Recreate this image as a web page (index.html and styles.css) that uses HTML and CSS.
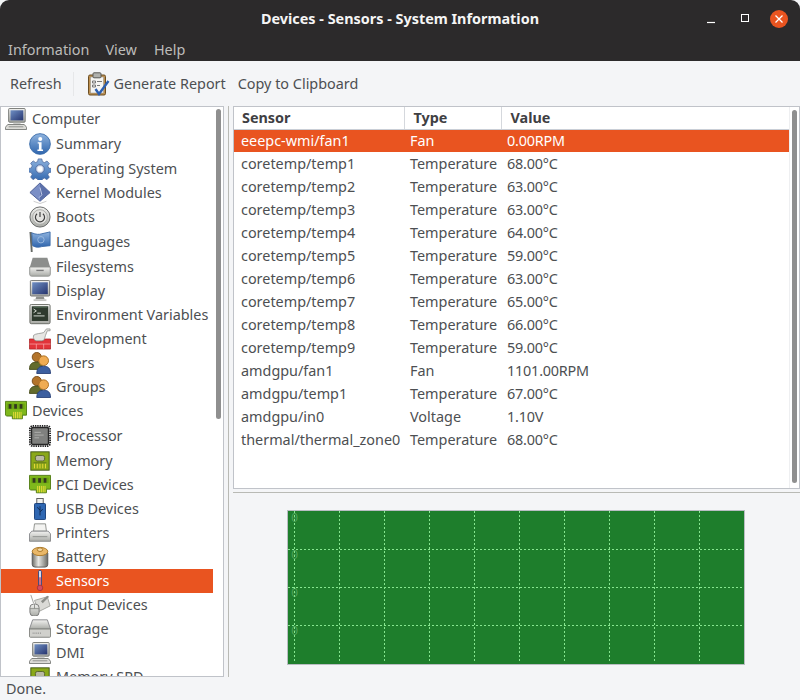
FILE: index.html
```html
<!DOCTYPE html>
<html lang="en">
<head>
<meta charset="utf-8">
<title>Devices - Sensors - System Information</title>
<link rel="stylesheet" href="styles.css">
</head>
<body>
<svg class="defs" aria-hidden="true">
  <defs>
    <linearGradient id="gBlue" x1="0" y1="0" x2="0" y2="1"><stop offset="0" stop-color="#8fb3de"/><stop offset="1" stop-color="#2f65ad"/></linearGradient>
    <linearGradient id="gGray" x1="0" y1="0" x2="0" y2="1"><stop offset="0" stop-color="#f2f2f0"/><stop offset="1" stop-color="#a9aba6"/></linearGradient>
    <linearGradient id="gScreen" x1="0" y1="0" x2="1" y2="1"><stop offset="0" stop-color="#6f8fc4"/><stop offset="1" stop-color="#26346e"/></linearGradient>
    <linearGradient id="gBat" x1="0" y1="0" x2="1" y2="0"><stop offset="0" stop-color="#6d6d68"/><stop offset=".4" stop-color="#e8e8e4"/><stop offset="1" stop-color="#6b6b66"/></linearGradient>
    <symbol id="i-computer" viewBox="0 0 24 24">
      <rect x="4" y="0.500" width="18" height="15" rx="1" fill="url(#gGray)" stroke="#6d706c"/>
      <rect x="6" y="2.500" width="14" height="11" fill="url(#gScreen)"/>
      <rect x="9" y="15" width="8" height="2" fill="#a5a7a3"/>
      <path d="M3 18h18l2.500 3v2.500H.5V21z" fill="#dcdcd8" stroke="#777a76"/>
      <path d="M4 20.500h16" stroke="#8b8d89"/>
    </symbol>
    <symbol id="i-info" viewBox="0 0 24 24">
      <circle cx="12" cy="12" r="11.300" fill="url(#gBlue)" stroke="#3a6cab"/>
      <circle cx="12.300" cy="6.500" r="2.200" fill="#fff"/>
      <path d="M9.500 10h4.200v8h1.600v1.500H9.200V18h1.600v-6.500H9.500z" fill="#fff"/>
    </symbol>
    <symbol id="i-gear" viewBox="0 0 24 24">
      <path d="M10 1h4l.6 3 2.400 1 2.600-1.700 2.600 2.800-1.700 2.500 1 2.400 3 .6v3.800l-3 .6-1 2.400 1.700 2.600-2.800 2.600-2.500-1.700-2.300 1-.6 3h-4l-.6-3-2.400-1-2.600 1.700-2.600-2.800 1.700-2.500-1-2.400-3-.6v-3.800l3-.6 1-2.400L1.800 5.800l2.800-2.600L7 4.900 9.400 4z" fill="url(#gBlue)" stroke="#4c659b" stroke-width=".8"/>
      <circle cx="12" cy="12" r="4.600" fill="#dfe5f1" stroke="#4c659b"/>
      <circle cx="12" cy="12" r="2.600" fill="#fff"/>
    </symbol>
    <symbol id="i-kernel" viewBox="0 0 24 24">
      <path d="M12 1l11 10.500L12 21 1 11.500z" fill="#7b8fc6" stroke="#46588f"/>
      <path d="M12 1l11 10.500L12 21z" fill="#5c70aa"/>
      <path d="M12 6l2 8-3 3" stroke="#c9d2ea" fill="none"/>
      <path d="M5 21l7 2.500 7-2.500" stroke="#c8c8c8" fill="none"/>
    </symbol>
    <symbol id="i-power" viewBox="0 0 24 24">
      <circle cx="12" cy="12" r="11" fill="url(#gGray)" stroke="#5f6160"/>
      <circle cx="12" cy="12" r="8" fill="#e3e3e0" stroke="#a7a8a5"/>
      <path d="M8.800 8.500a5 5 0 1 0 6.400 0" fill="none" stroke="#3f3f3f" stroke-width="1.300"/>
      <path d="M12 6.500v5.500" stroke="#3f3f3f" stroke-width="1.300"/>
    </symbol>
    <symbol id="i-flag" viewBox="0 0 24 24">
      <path d="M.5 1h2.500l1 22H2z" fill="#666a66"/>
      <path d="M3 2c5 2 8 2 11 1l9-2v15l-9 1c-3 1-7 1-10-1z" fill="url(#gBlue)" stroke="#3c6ba8"/>
      <circle cx="13" cy="9.500" r="3.500" fill="none" stroke="#9dbbe0"/>
    </symbol>
    <symbol id="i-drive" viewBox="0 0 24 24">
      <path d="M4 2h16l3 10H1z" fill="#8c8e8c"/>
      <path d="M.8 12h22.400v8a2 2 0 0 1-2 2H2.800a2 2 0 0 1-2-2z" fill="url(#gGray)" stroke="#8d8f8c"/>
      <rect x="8" y="15" width="8" height="1.500" fill="#777"/>
    </symbol>
    <symbol id="i-display" viewBox="0 0 24 24">
      <rect x="1.500" y="0.500" width="21" height="17" rx="1" fill="url(#gGray)" stroke="#6e706d"/>
      <rect x="3.500" y="2.500" width="17" height="13" fill="url(#gScreen)"/>
      <path d="M8 18h8l1 3H7z" fill="#8e908d"/>
      <path d="M5 22h14" stroke="#c5c5c2" stroke-width="2"/>
    </symbol>
    <symbol id="i-terminal" viewBox="0 0 24 24">
      <rect x="1" y="0.500" width="22" height="21" rx="1.500" fill="url(#gGray)" stroke="#64665f"/>
      <rect x="3" y="2.500" width="18" height="16" fill="#2e3a2e"/>
      <path d="M5 5.500l3 2-3 2M9 10h4M5 13h12" fill="none" stroke="#e2e8e0"/>
      <path d="M5 3.500h15" stroke="#55705a"/>
    </symbol>
    <symbol id="i-dev" viewBox="0 0 24 24">
      <path d="M.5 12h6l2 2h7l2-2h6v11H.5z" fill="#e2343a" stroke="#a81e22" stroke-width=".8"/>
      <path d="M.5 17.500h23M8 17.500V23M16 17.500V23" stroke="#f9a8aa" stroke-width=".8"/>
      <path d="M5 8c2-2 8-2 11-3l3-4h4v2h-3l-2 5c-1 4-2 6-4 6H8c-2 0-4-3-3-6z" fill="#e6e6e3" stroke="#8b8c88" stroke-width=".8"/>
    </symbol>
    <symbol id="i-users" viewBox="0 0 24 24">
      <circle cx="8.500" cy="5.500" r="5" fill="#b3742a" stroke="#7a4c18"/>
      <path d="M.5 19c0-6 3-8 8-8s6 2 6 8z" fill="#636b2c" stroke="#4a5020"/>
      <circle cx="16" cy="9.500" r="5.300" fill="#f0ac52" stroke="#a86c20"/>
      <path d="M8.500 23.500c0-6 3-8 7.500-8s7.500 2 7.500 8z" fill="#3c5fa0" stroke="#2a4278"/>
    </symbol>
    <symbol id="i-board" viewBox="0 0 24 24">
      <path d="M.5 1.500h23v15H19v4H8v-3H2l-1.500-1z" fill="#7fb81c" stroke="#4f7a10"/>
      <rect x="2.500" y="4" width="19" height="6" fill="#6ba412"/>
      <rect x="4" y="4.500" width="3" height="5" fill="#32381e"/>
      <rect x="10" y="4.500" width="3" height="5" fill="#32381e"/>
      <rect x="16" y="4.500" width="3" height="5" fill="#32381e"/>
      <path d="M9.500 13v7M11.500 13v7M13.500 13v7M15.500 13v7M17.500 13v7" stroke="#f1dc3a"/>
    </symbol>
    <symbol id="i-cpu" viewBox="0 0 24 24">
      <rect x="1" y="1" width="22" height="22" rx="3" fill="none" stroke="#222" stroke-width="2" stroke-dasharray="1.500 1"/>
      <rect x="2" y="2" width="20" height="20" rx="2" fill="#262626"/>
      <rect x="3.500" y="3.500" width="17" height="17" rx="1" fill="#7f807e"/>
      <path d="M6 8h7M6 11h10M6 14h5" stroke="#b2b2b0"/>
    </symbol>
    <symbol id="i-mem" viewBox="0 0 24 24">
      <rect x="2" y="2" width="20" height="20" fill="#8aa818" stroke="#3b5212"/>
      <rect x="7" y="6" width="10" height="6" rx="2" fill="#bab9a4" stroke="#54622a"/>
      <path d="M5 14h14" stroke="#5b701c"/>
      <path d="M6 15v5M9 15v5M12 15v5M15 15v5M18 15v5" stroke="#eed93a"/>
    </symbol>
    <symbol id="i-usb" viewBox="0 0 24 24">
      <rect x="8.500" y="0.500" width="7" height="6" fill="#f0f0ee" stroke="#555"/>
      <rect x="6" y="6" width="12" height="17.500" rx="1" fill="#2f67b2" stroke="#163d78"/>
      <path d="M12 9v10M12 13l-2.500-2v-1M12 15l2.500-2v-1" stroke="#10294f" fill="none"/>
    </symbol>
    <symbol id="i-printer" viewBox="0 0 24 24">
      <path d="M6 2h12l1 8H5z" fill="#f3f3f1" stroke="#8a8c88"/>
      <path d="M3 10h18l2.500 3v8H.5v-8z" fill="url(#gGray)" stroke="#85878a"/>
      <path d="M4 16h16" stroke="#8d8f8b"/>
    </symbol>
    <symbol id="i-battery" viewBox="0 0 24 24">
      <rect x="3.500" y="5" width="17" height="18" rx="3" fill="url(#gBat)" stroke="#555"/>
      <ellipse cx="12" cy="6" rx="8.500" ry="4.500" fill="#e9b768" stroke="#a87626"/>
      <ellipse cx="12" cy="4" rx="3" ry="2" fill="#f6d9a3" stroke="#a87626"/>
    </symbol>
    <symbol id="i-therm" viewBox="0 0 24 24">
      <rect x="10.500" y="0.500" width="3" height="19" rx="1.200" fill="#eef2fa" stroke="#1d3d86"/>
      <path d="M12 8v10" stroke="#d3304a" stroke-width="1.400"/>
      <circle cx="12" cy="19.500" r="3" fill="#d64a60" stroke="#a33"/>
    </symbol>
    <symbol id="i-input" viewBox="0 0 24 24">
      <path d="M6 7l14-4 3 10-12 6z" fill="#dadad6" stroke="#a3a49f"/>
      <path d="M13 8l7-6 2 1-7 7z" fill="#8b8d88"/>
      <path d="M2 1l3 9" stroke="#9b9c98"/>
      <rect x="1" y="11" width="10" height="13" rx="4" fill="url(#gGray)" stroke="#777"/>
      <path d="M6 11v5M1 16h10" stroke="#8a8c88"/>
    </symbol>
    <symbol id="i-storage" viewBox="0 0 24 24">
      <path d="M4 2h16l3.500 10H.5z" fill="url(#gGray)" stroke="#85878a"/>
      <path d="M.5 12h23v8a1 1 0 0 1-1 1h-21a1 1 0 0 1-1-1z" fill="#d0d0cc" stroke="#7f817c"/>
      <path d="M4 16.500h10" stroke="#777" stroke-dasharray="1 1"/>
    </symbol>
    <symbol id="i-report" viewBox="0 0 24 24">
      <rect x="1.500" y="3" width="17" height="20" rx="1.500" fill="#bd8f4f" stroke="#6b4e24"/>
      <rect x="3.500" y="5" width="13" height="16" fill="#f5f5f3" stroke="#8f8f8b" stroke-width=".5"/>
      <rect x="6" y="0.800" width="8" height="5" rx="1" fill="#b0b1ad" stroke="#5a5b57"/>
      <path d="M5.500 9h3v2h-3zM5.500 13h3v2h-3zM10 9.500h5M10 13.500h3" fill="none" stroke="#777"/>
      <path d="M8.500 17l3.500 5 9.500-13" fill="none" stroke="#2c5fb0" stroke-width="2.400"/>
    </symbol>
  </defs>
</svg>

<div class="window">
  <header class="titlebar">
    <div class="title-row">
      <h1 class="title">Devices - Sensors - System Information</h1>
      <div class="controls">
        <svg class="ctl" width="18" height="18" viewBox="0 0 18 18"><path d="M1 12.500h8" stroke="#fff" stroke-width="1.200"/></svg>
        <svg class="ctl ctl-max" width="18" height="18" viewBox="0 0 18 18"><rect x="4.500" y="4.500" width="7" height="7" fill="none" stroke="#fff"/></svg>
        <svg class="ctl-close" width="18" height="18" viewBox="0 0 18 18"><circle cx="9" cy="9" r="9" fill="#e95420"/><path d="M5.500 5.500l7 7M12.500 5.500l-7 7" stroke="#fff" stroke-width="1.300"/></svg>
      </div>
    </div>
    <nav class="menubar">
      <span class="menu-item">Information</span>
      <span class="menu-item">View</span>
      <span class="menu-item">Help</span>
    </nav>
  </header>

  <div class="toolbar">
    <span class="tool">Refresh</span>
    <span class="tool-sep"></span>
    <svg class="tool-icon" width="24" height="24"><use href="#i-report"/></svg>
    <span class="tool tool-report">Generate Report</span>
    <span class="tool">Copy to Clipboard</span>
  </div>

  <main class="panes">
    <aside class="tree-pane">
      <ul class="tree">
        <li class="row top"><svg class="ico"><use href="#i-computer"/></svg><span class="label">Computer</span></li>
        <li class="row tall"><svg class="ico"><use href="#i-info"/></svg><span class="label">Summary</span></li>
        <li class="row tall"><svg class="ico"><use href="#i-gear"/></svg><span class="label">Operating System</span></li>
        <li class="row"><svg class="ico"><use href="#i-kernel"/></svg><span class="label">Kernel Modules</span></li>
        <li class="row"><svg class="ico"><use href="#i-power"/></svg><span class="label">Boots</span></li>
        <li class="row tall"><svg class="ico"><use href="#i-flag"/></svg><span class="label">Languages</span></li>
        <li class="row tall"><svg class="ico"><use href="#i-drive"/></svg><span class="label">Filesystems</span></li>
        <li class="row"><svg class="ico"><use href="#i-display"/></svg><span class="label">Display</span></li>
        <li class="row"><svg class="ico"><use href="#i-terminal"/></svg><span class="label">Environment Variables</span></li>
        <li class="row"><svg class="ico"><use href="#i-dev"/></svg><span class="label">Development</span></li>
        <li class="row"><svg class="ico"><use href="#i-users"/></svg><span class="label">Users</span></li>
        <li class="row"><svg class="ico"><use href="#i-users"/></svg><span class="label">Groups</span></li>
        <li class="row top"><svg class="ico"><use href="#i-board"/></svg><span class="label">Devices</span></li>
        <li class="row tall"><svg class="ico"><use href="#i-cpu"/></svg><span class="label">Processor</span></li>
        <li class="row tall"><svg class="ico"><use href="#i-mem"/></svg><span class="label">Memory</span></li>
        <li class="row"><svg class="ico"><use href="#i-board"/></svg><span class="label">PCI Devices</span></li>
        <li class="row"><svg class="ico"><use href="#i-usb"/></svg><span class="label">USB Devices</span></li>
        <li class="row"><svg class="ico"><use href="#i-printer"/></svg><span class="label">Printers</span></li>
        <li class="row"><svg class="ico"><use href="#i-battery"/></svg><span class="label">Battery</span></li>
        <li class="row selected"><svg class="ico"><use href="#i-therm"/></svg><span class="label">Sensors</span></li>
        <li class="row"><svg class="ico"><use href="#i-input"/></svg><span class="label">Input Devices</span></li>
        <li class="row"><svg class="ico"><use href="#i-storage"/></svg><span class="label">Storage</span></li>
        <li class="row"><svg class="ico"><use href="#i-computer"/></svg><span class="label">DMI</span></li>
        <li class="row"><svg class="ico"><use href="#i-mem"/></svg><span class="label">Memory SPD</span></li>
      </ul>
      <div class="scroll-gutter"><div class="thumb thumb-tree"></div></div>
    </aside>

    <div class="pane-rule"></div>

    <section class="right">
      <div class="table-frame">
        <div class="table-wrap">
          <table class="sensors">
            <thead>
              <tr><th class="c1">Sensor</th><th class="c2">Type</th><th class="c3">Value</th></tr>
            </thead>
            <tbody>
              <tr class="selected"><td>eeepc-wmi/fan1</td><td>Fan</td><td>0.00RPM</td></tr>
              <tr><td>coretemp/temp1</td><td>Temperature</td><td>68.00°C</td></tr>
              <tr><td>coretemp/temp2</td><td>Temperature</td><td>63.00°C</td></tr>
              <tr><td>coretemp/temp3</td><td>Temperature</td><td>63.00°C</td></tr>
              <tr><td>coretemp/temp4</td><td>Temperature</td><td>64.00°C</td></tr>
              <tr><td>coretemp/temp5</td><td>Temperature</td><td>59.00°C</td></tr>
              <tr><td>coretemp/temp6</td><td>Temperature</td><td>63.00°C</td></tr>
              <tr><td>coretemp/temp7</td><td>Temperature</td><td>65.00°C</td></tr>
              <tr><td>coretemp/temp8</td><td>Temperature</td><td>66.00°C</td></tr>
              <tr><td>coretemp/temp9</td><td>Temperature</td><td>59.00°C</td></tr>
              <tr><td>amdgpu/fan1</td><td>Fan</td><td>1101.00RPM</td></tr>
              <tr><td>amdgpu/temp1</td><td>Temperature</td><td>67.00°C</td></tr>
              <tr><td>amdgpu/in0</td><td>Voltage</td><td>1.10V</td></tr>
              <tr><td>thermal/thermal_zone0</td><td>Temperature</td><td>68.00°C</td></tr>
            </tbody>
          </table>
        </div>
        <div class="scroll-gutter gutter-table"><div class="thumb thumb-table"></div></div>
      </div>
      <div class="h-rule"></div>
      <div class="chart-area">
        <svg class="chart" width="456" height="153" viewBox="0 0 456 153">
          <rect width="456" height="153" fill="#1e7e2c"/>
          <g class="chart-labels">
            <text x="3" y="11">0</text><text x="3" y="48">0</text><text x="3" y="86">0</text><text x="3" y="124">0</text>
          </g>
          <g class="chart-grid">
            <path d="M0 38.500H454M0 76.500H454M0 114.500H454"/>
            <path d="M6.500 0V151M51.500 0V151M96.500 0V151M141.500 0V151M186.500 0V151M231.500 0V151M276.500 0V151M321.500 0V151M366.500 0V151M411.500 0V151"/>
          </g>
        </svg>
      </div>
    </section>
  </main>

  <footer class="status">Done.</footer>
</div>
</body>
</html>
```

FILE: styles.css
```css
* { box-sizing: border-box; }

html, body {
  margin: 0;
  padding: 0;
  background: #fff;
}

body {
  font-family: "Noto Sans", "Open Sans", sans-serif;
  font-size: 14.4px;
  color: #4d4f52;
  overflow: hidden;
}

.defs {
  position: absolute;
  width: 0;
  height: 0;
}

.window {
  width: 800px;
  height: 700px;
  display: flex;
  flex-direction: column;
  background: #f4f5f7;
}

/* Title bar and menu */
.titlebar {
  height: 61px;
  flex: none;
  background: #2c2a2b;
  border-radius: 9px 9px 0 0;
}

.title-row {
  height: 37px;
  position: relative;
  display: flex;
  align-items: center;
  justify-content: center;
}

.title {
  margin: 0;
  font-size: 14.4px;
  font-weight: 700;
  color: #f5f5f5;
}

.controls {
  position: absolute;
  left: 706px;
  top: 10px;
  display: flex;
  align-items: center;
}

.ctl { flex: none; }
.ctl-max { margin-left: 13px; }
.ctl-close { margin-left: 15px; }

.menubar {
  height: 24px;
  display: flex;
  align-items: center;
  padding-left: 8px;
  gap: 16px;
}

.menu-item { color: #bdbcba; }
.menu-item:last-child { margin-left: 1px; }

/* Toolbar */
.toolbar {
  height: 45px;
  flex: none;
  display: flex;
  align-items: center;
  padding-left: 10px;
}

.tool { color: #4d4f52; }

.tool-sep {
  width: 1px;
  height: 24px;
  margin: 0 13px 0 11px;
  background: #e6e7e9;
}

.tool-icon {
  flex: none;
  margin-right: 3px;
}

.tool-report { margin-right: 12px; }

/* Panes */
.panes {
  height: 571px;
  flex: none;
  display: flex;
}

.tree-pane {
  width: 224px;
  flex: none;
  display: flex;
  background: #fff;
  border: 1px solid #c0c3c9;
  overflow: hidden;
}

.tree {
  width: 212px;
  flex: none;
  margin: 0;
  padding: 0;
  list-style: none;
}

.row {
  height: 24px;
  display: flex;
  align-items: center;
  padding-left: 28px;
  white-space: nowrap;
}

.row.tall { height: 25px; }
.row.top { padding-left: 4px; }

.label { padding-bottom: 2px; }
.row.tall .label { padding-bottom: 1px; }

.ico {
  width: 22px;
  height: 22px;
  flex: none;
  margin-right: 5px;
}

.row.selected {
  background: #e95420;
  color: #fff;
}

.scroll-gutter {
  flex: 1;
  padding: 2px 2px 0 3px;
}

.thumb {
  background: #8f8f8f;
  border-radius: 3px;
}

.thumb-tree {
  width: 5px;
  height: 310px;
}

.pane-rule {
  width: 1px;
  margin-left: 4px;
  flex: none;
  background: #b9bab5;
}

.right {
  flex: 1;
  display: flex;
  flex-direction: column;
  padding-left: 4px;
}

.table-frame {
  height: 383px;
  flex: none;
  display: flex;
  background: #fff;
  border: 1px solid #c0c3c9;
}

.table-wrap {
  width: 555px;
  flex: none;
}

.gutter-table {
  border-left: 1px solid #eeeff1;
  padding: 3px 2px 0 2px;
}

.thumb-table {
  width: 5px;
  height: 373px;
}

.sensors {
  width: 555px;
  border-collapse: collapse;
  table-layout: fixed;
}

.sensors th {
  height: 22px;
  padding: 0 0 0 8px;
  text-align: left;
  font-weight: 700;
  color: #3f4043;
  border-right: 1px solid #d5d8dd;
  border-bottom: 1px solid #c9ced6;
}

.sensors th + th { padding-left: 9px; }

.sensors .c1 { width: 170px; }
.sensors .c2 { width: 97px; }
.sensors .c3 { border-right: 0; }

.sensors td {
  height: 23px;
  padding: 0 0 0 7px;
  white-space: nowrap;
}

.sensors td + td { padding-left: 6px; }
.sensors td:last-child { letter-spacing: -0.2px; }

.sensors .selected td {
  background: #e95420;
  color: #fff;
}

.h-rule {
  height: 1px;
  margin-top: 3px;
  flex: none;
  background: #b9bab5;
}

.chart-area {
  flex: 1;
  display: flex;
  justify-content: center;
  align-items: flex-start;
  padding: 17px 2px 0 0;
}

.chart {
  box-sizing: content-box;
  border: 1px solid #b9bdc2;
  display: block;
}

.chart-grid path {
  fill: none;
  stroke: #86e68f;
  stroke-width: 1;
  stroke-dasharray: 2 2;
}

.chart-labels text {
  font-family: "Liberation Mono", monospace;
  font-size: 12px;
  fill: #4fa35b;
}

/* Status */
.status {
  flex: 1;
  display: flex;
  align-items: center;
  padding-left: 6px;
}
```
